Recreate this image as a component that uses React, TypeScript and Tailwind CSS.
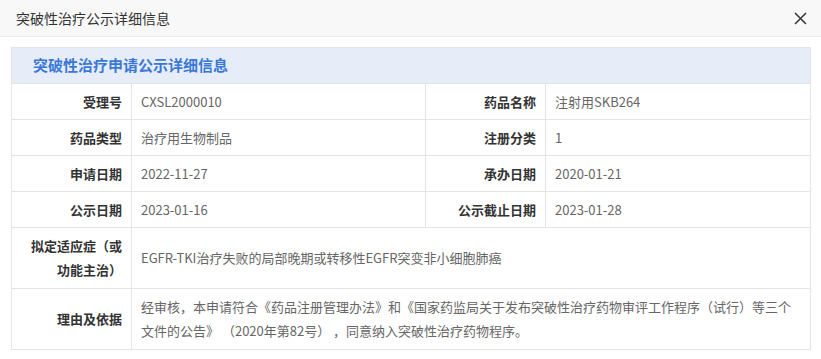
import React from "react";

function Label({ children }: { children: React.ReactNode }) {
  return (
    <td className="border border-[#e4e4e4] px-[9px] text-right align-middle text-[13px] font-bold leading-[24px] text-[#333]">
      {children}
    </td>
  );
}

function Value({ children, span }: { children: React.ReactNode; span?: number }) {
  return (
    <td
      colSpan={span}
      className="border border-[#e4e4e4] px-[9px] text-left align-middle text-[13px] leading-[24px] text-[#666]"
    >
      {children}
    </td>
  );
}

export default function App() {
  return (
    <div className="w-[821px] h-[359px] bg-white overflow-hidden" style={{ fontFamily: '"Noto Sans CJK SC", "Noto Sans", sans-serif' }}>
      <div className="flex h-[37px] items-center justify-between border-b border-[#ebebeb] bg-[#f8f8f8] pl-[16px] pr-[14px]">
        <span className="text-[14px] text-[#333]">突破性治疗公示详细信息</span>
        <svg width="13" height="13" viewBox="0 0 13 13" className="mt-[1px]">
          <path d="M1 1 L12 12 M12 1 L1 12" stroke="#333" strokeWidth="1.5" fill="none" />
        </svg>
      </div>
      <div className="px-[11px] pt-[10px]">
        <table className="w-[799px] table-fixed border-collapse">
          <colgroup>
            <col className="w-[120px]" />
            <col className="w-[294px]" />
            <col className="w-[120px]" />
            <col className="w-[265px]" />
          </colgroup>
          <tbody>
            <tr className="h-[36px]">
              <td colSpan={4} className="border border-[#e4e4e4] bg-[#e6edf8] pl-[21px] text-[15px] font-bold text-[#3a78d8]">
                突破性治疗申请公示详细信息
              </td>
            </tr>
            <tr className="h-[36px]">
              <Label>受理号</Label>
              <Value>CXSL2000010</Value>
              <Label>药品名称</Label>
              <Value>注射用SKB264</Value>
            </tr>
            <tr className="h-[36px]">
              <Label>药品类型</Label>
              <Value>治疗用生物制品</Value>
              <Label>注册分类</Label>
              <Value>1</Value>
            </tr>
            <tr className="h-[36px]">
              <Label>申请日期</Label>
              <Value>2022-11-27</Value>
              <Label>承办日期</Label>
              <Value>2020-01-21</Value>
            </tr>
            <tr className="h-[36px]">
              <Label>公示日期</Label>
              <Value>2023-01-16</Value>
              <Label>公示截止日期</Label>
              <Value>2023-01-28</Value>
            </tr>
            <tr className="h-[61px]">
              <Label>拟定适应症（或功能主治）</Label>
              <Value span={3}>EGFR-TKI治疗失败的局部晚期或转移性EGFR突变非小细胞肺癌</Value>
            </tr>
            <tr className="h-[61px]">
              <Label>理由及依据</Label>
              <Value span={3}>
                经审核，本申请符合《药品注册管理办法》和《国家药监局关于发布突破性治疗药物审评工作程序（试行）等三个
                <br />
                文件的公告》 （2020年第82号） ，同意纳入突破性治疗药物程序。
              </Value>
            </tr>
          </tbody>
        </table>
      </div>
    </div>
  );
}
